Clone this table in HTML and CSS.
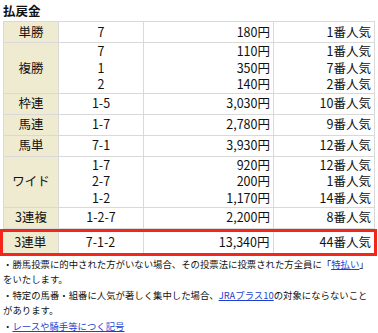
FILE: index.html
```html
<!DOCTYPE html>
<html lang="ja">
<head>
<meta charset="utf-8">
<title>払戻金</title>
<link rel="stylesheet" href="styles.css">
</head>
<body>
<div class="wrap">
  <h3 class="title">払戻金</h3>
  <table class="pay">
    <colgroup><col class="c1"><col class="c2"><col class="c3"><col class="c4"></colgroup>
    <tr><th>単勝</th><td class="num">7</td><td class="yen">180円</td><td class="pop">1番人気</td></tr>
    <tr><th>複勝</th><td class="num"><div>7</div><div>1</div><div>2</div></td><td class="yen"><div>110円</div><div>350円</div><div>140円</div></td><td class="pop"><div>1番人気</div><div>7番人気</div><div>2番人気</div></td></tr>
    <tr><th>枠連</th><td class="num">1-5</td><td class="yen">3,030円</td><td class="pop">10番人気</td></tr>
    <tr><th>馬連</th><td class="num">1-7</td><td class="yen">2,780円</td><td class="pop">9番人気</td></tr>
    <tr><th>馬単</th><td class="num">7-1</td><td class="yen">3,930円</td><td class="pop">12番人気</td></tr>
    <tr><th>ワイド</th><td class="num"><div>1-7</div><div>2-7</div><div>1-2</div></td><td class="yen"><div>920円</div><div>200円</div><div>1,170円</div></td><td class="pop"><div>12番人気</div><div>1番人気</div><div>14番人気</div></td></tr>
    <tr><th>3連複</th><td class="num">1-2-7</td><td class="yen">2,200円</td><td class="pop">8番人気</td></tr>
  </table>
  <div class="hl">
    <table class="pay">
      <colgroup><col class="c1"><col class="c2"><col class="c3"><col class="c4"></colgroup>
      <tr><th>3連単</th><td class="num">7-1-2</td><td class="yen">13,340円</td><td class="pop">44番人気</td></tr>
    </table>
  </div>
  <ul class="notes">
    <li>・勝馬投票に的中された方がいない場合、その投票法に投票された方全員に「<a href="#">特払い</a>」をいたします。</li>
    <li>・特定の馬番・組番に人気が著しく集中した場合、<a href="#">JRAプラス10</a>の対象にならないことがあります。</li>
    <li>・<a href="#">レースや騎手等につく記号</a></li>
  </ul>
</div>
</body>
</html>
```

FILE: styles.css
```css
html, body {
  margin: 0;
  padding: 0;
  background: #fff;
}
body {
  font-family: "Noto Sans CJK JP", "Noto Sans", sans-serif;
  color: #111;
}
.wrap {
  padding: 3px 4px 0 3px;
}
.title {
  margin: 0 0 2px;
  font-size: 12.5px;
  line-height: 16px;
  font-weight: bold;
}
.pay {
  width: 371px;
  table-layout: fixed;
  border-collapse: collapse;
  font-size: 12.5px;
  line-height: 16.6px;
}
.c1 { width: 55px; }
.c2 { width: 85px; }
.c3 { width: 130px; }
.c4 { width: 101px; }
.pay th,
.pay td {
  border: 1px solid #d9d9d9;
  height: 20px;
  padding: 0 3px;
  vertical-align: middle;
}
.pay th {
  background: #eeebd1;
  font-weight: normal;
  text-align: center;
}
.num { text-align: center; }
.yen { text-align: right; }
.pop { text-align: right; }
.hl {
  margin: 0 -3px;
  border: 3px solid #f2261b;
}
.hl .pay th,
.hl .pay td {
  border-top: 0;
  border-bottom: 0;
  height: 21px;
}
.hl .pay th { border-left: 0; }
.hl .pay td.pop { border-right: 0; }
.notes {
  list-style: none;
  margin: 1px 0 0;
  padding: 0;
  font-size: 9.4px;
  line-height: 15px;
}
.notes li + li { margin-top: 1px; }
.notes a {
  color: #1f3fd1;
  text-decoration: underline;
}
```
